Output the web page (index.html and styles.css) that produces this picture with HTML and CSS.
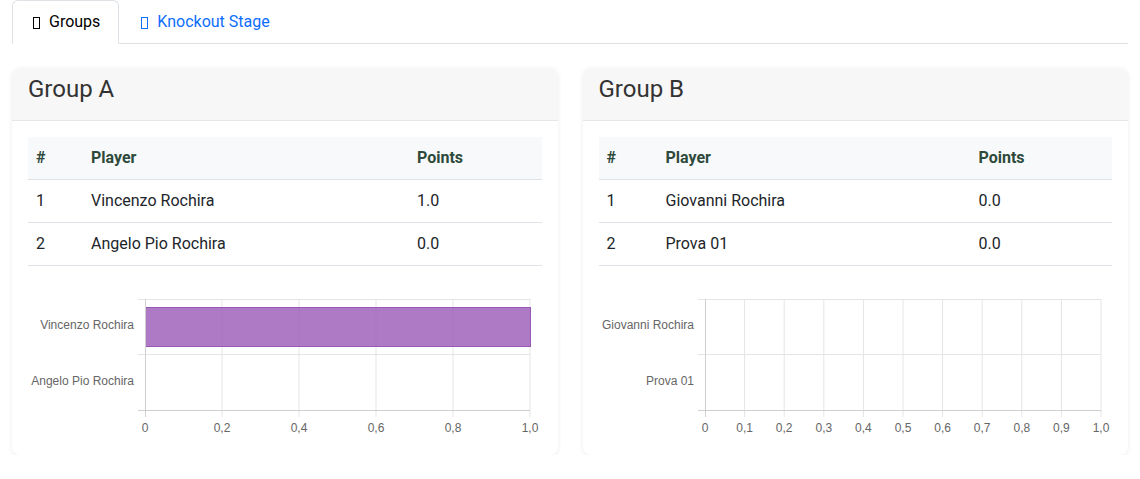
FILE: index.html
```html
<!DOCTYPE html>
<html lang="en">
<head>
<meta charset="utf-8">
<title>Groups</title>
<link rel="stylesheet" href="styles.css">
</head>
<body>
<div class="page">
  <ul class="tabs">
    <li class="tab active"><span class="tofu"></span>Groups</li>
    <li class="tab link"><span class="tofu"></span>Knockout Stage</li>
  </ul>

  <div class="groups">
    <section class="card">
      <header class="card-header">Group A</header>
      <div class="card-body">
        <table class="standings standings-a">
          <thead>
            <tr><th class="c-num">#</th><th class="c-player">Player</th><th class="c-points">Points</th></tr>
          </thead>
          <tbody>
            <tr><td>1</td><td>Vincenzo Rochira</td><td>1.0</td></tr>
            <tr><td>2</td><td>Angelo Pio Rochira</td><td>0.0</td></tr>
          </tbody>
        </table>
        <svg class="chart" width="514" height="155" viewBox="0 0 514 155">
          <g class="grid">
            <line x1="194" y1="14" x2="194" y2="132"/>
            <line x1="271" y1="14" x2="271" y2="132"/>
            <line x1="348" y1="14" x2="348" y2="132"/>
            <line x1="425" y1="14" x2="425" y2="132"/>
            <line x1="502" y1="14" x2="502" y2="132"/>
            <line x1="110" y1="14.5" x2="502" y2="14.5"/>
            <line x1="110" y1="69.5" x2="502" y2="69.5"/>
          </g>
          <rect class="bar" x="117.5" y="22.5" width="385" height="39"/>
          <g class="axis">
            <line x1="117.5" y1="14" x2="117.5" y2="132"/>
            <line x1="110" y1="125.5" x2="502" y2="125.5"/>
          </g>
          <g class="ylabels">
            <text x="106" y="44">Vincenzo Rochira</text>
            <text x="106" y="100">Angelo Pio Rochira</text>
          </g>
          <g class="xlabels">
            <text x="117" y="147">0</text>
            <text x="194" y="147">0,2</text>
            <text x="271" y="147">0,4</text>
            <text x="348" y="147">0,6</text>
            <text x="425" y="147">0,8</text>
            <text x="502" y="147">1,0</text>
          </g>
        </svg>
      </div>
    </section>

    <section class="card">
      <header class="card-header">Group B</header>
      <div class="card-body">
        <table class="standings standings-b">
          <thead>
            <tr><th class="c-num">#</th><th class="c-player">Player</th><th class="c-points">Points</th></tr>
          </thead>
          <tbody>
            <tr><td>1</td><td>Giovanni Rochira</td><td>0.0</td></tr>
            <tr><td>2</td><td>Prova 01</td><td>0.0</td></tr>
          </tbody>
        </table>
        <svg class="chart" width="514" height="155" viewBox="0 0 514 155">
          <g class="grid">
            <line x1="145.6" y1="14" x2="145.6" y2="132"/>
            <line x1="185.2" y1="14" x2="185.2" y2="132"/>
            <line x1="224.8" y1="14" x2="224.8" y2="132"/>
            <line x1="264.4" y1="14" x2="264.4" y2="132"/>
            <line x1="304" y1="14" x2="304" y2="132"/>
            <line x1="343.6" y1="14" x2="343.6" y2="132"/>
            <line x1="383.2" y1="14" x2="383.2" y2="132"/>
            <line x1="422.8" y1="14" x2="422.8" y2="132"/>
            <line x1="462.4" y1="14" x2="462.4" y2="132"/>
            <line x1="502" y1="14" x2="502" y2="132"/>
            <line x1="99" y1="14.5" x2="502" y2="14.5"/>
            <line x1="99" y1="69.5" x2="502" y2="69.5"/>
          </g>
          <g class="axis">
            <line x1="106.5" y1="14" x2="106.5" y2="132"/>
            <line x1="99" y1="125.5" x2="502" y2="125.5"/>
          </g>
          <g class="ylabels">
            <text x="95" y="44">Giovanni Rochira</text>
            <text x="95" y="100">Prova 01</text>
          </g>
          <g class="xlabels">
            <text x="106" y="147">0</text>
            <text x="145.6" y="147">0,1</text>
            <text x="185.2" y="147">0,2</text>
            <text x="224.8" y="147">0,3</text>
            <text x="264.4" y="147">0,4</text>
            <text x="304" y="147">0,5</text>
            <text x="343.6" y="147">0,6</text>
            <text x="383.2" y="147">0,7</text>
            <text x="422.8" y="147">0,8</text>
            <text x="462.4" y="147">0,9</text>
            <text x="502" y="147">1,0</text>
          </g>
        </svg>
      </div>
    </section>
  </div>
</div>
</body>
</html>
```

FILE: styles.css
```css
* { box-sizing: border-box; }

html, body {
  margin: 0;
  padding: 0;
  background: #fff;
}

body {
  font-family: Roboto, "Liberation Sans", Arial, sans-serif;
  font-size: 16px;
  line-height: 24px;
  color: #212529;
}

.page {
  padding: 0 12px;
}

.tabs {
  list-style: none;
  margin: 0;
  padding: 0;
  display: flex;
  border-bottom: 1px solid #dee2e6;
}

.tab {
  display: flex;
  align-items: center;
  padding: 9px 18px 9px 20px;
  margin-bottom: -1px;
  border: 1px solid transparent;
  border-radius: 6px 6px 0 0;
}

.tab.active {
  color: #000;
  background: #fff;
  border-color: #dee2e6 #dee2e6 #fff;
}

.tab.link {
  color: #0d6efd;
  padding-left: 21px;
}

.tofu {
  display: inline-block;
  width: 7px;
  height: 12px;
  border: 1px solid currentColor;
  margin-right: 9px;
  margin-top: 1px;
}

.groups {
  display: grid;
  grid-template-columns: 1fr 1fr;
  column-gap: 25px;
  margin-top: 24px;
}

.card {
  background: #fff;
  border-radius: 8px;
  box-shadow: 0 1px 5px rgba(0, 0, 0, 0.08);
  overflow: hidden;
}

.card-header {
  background: #f7f7f7;
  border-bottom: 1px solid #e6e6e6;
  height: 53px;
  padding: 8px 16px 0;
  font-size: 24px;
  line-height: 27px;
  font-weight: 400;
  color: #333;
}

.card-body {
  padding: 16px 16px 15px;
}

.standings {
  width: 100%;
  border-collapse: collapse;
  table-layout: fixed;
}

.standings th,
.standings td {
  text-align: left;
  padding: 9px 8px;
  border-bottom: 1px solid #dee2e6;
}

.standings th {
  background: #f8f9fa;
  font-weight: 700;
  color: #2e4a3b;
}

.standings-a .c-num { width: 55px; }
.standings-a .c-player { width: 326px; }
.standings-b .c-num { width: 59px; }
.standings-b .c-player { width: 313px; }

.chart {
  display: block;
  margin-top: 19px;
}

.grid line {
  stroke: #e5e5e5;
  stroke-width: 1;
}

.axis line {
  stroke: #cfcfcf;
  stroke-width: 1;
}

.bar {
  fill: rgba(155, 89, 182, 0.8);
  stroke: #9b59b6;
  stroke-width: 1;
}

.chart text {
  font-family: "Liberation Sans", Arial, sans-serif;
  font-size: 12px;
  fill: #666;
}

.ylabels text {
  text-anchor: end;
}

.xlabels text {
  text-anchor: middle;
}
```
